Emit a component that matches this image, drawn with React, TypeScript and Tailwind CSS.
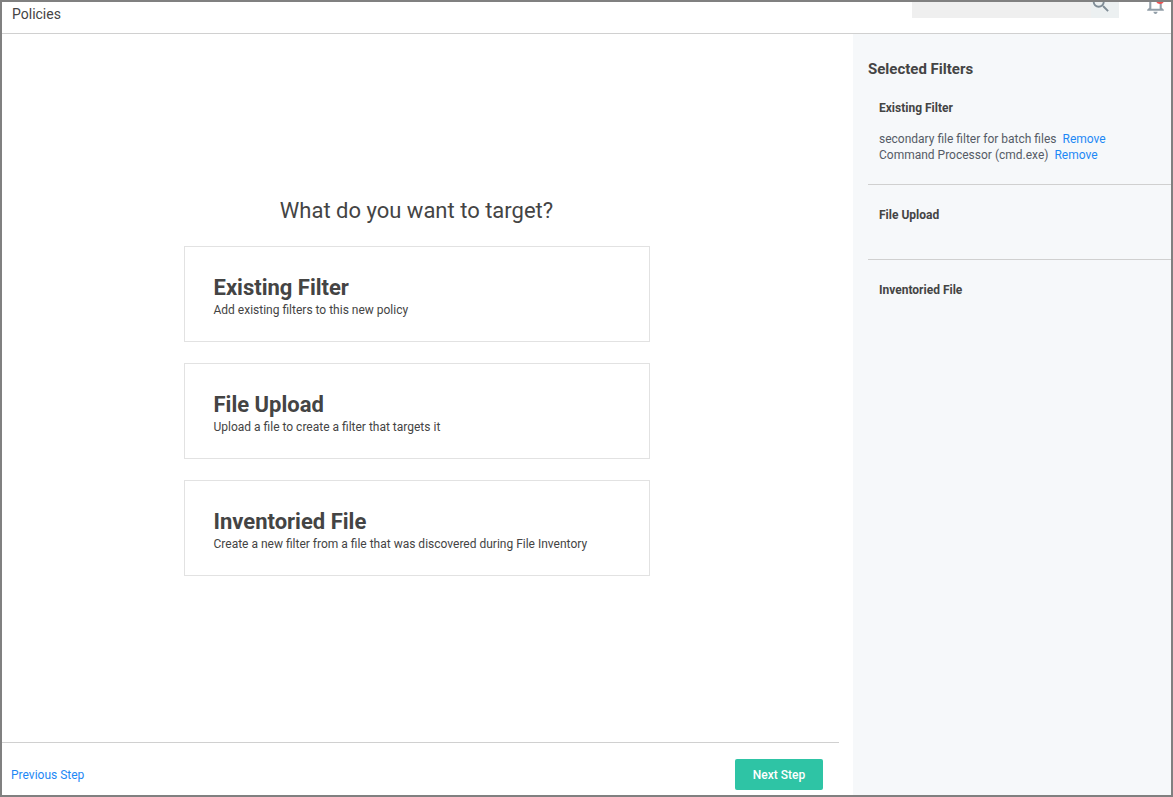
import { MdNotificationsNone, MdSearch } from "react-icons/md";

const targets = [
  { title: "Existing Filter", text: "Add existing filters to this new policy" },
  { title: "File Upload", text: "Upload a file to create a filter that targets it" },
  {
    title: "Inventoried File",
    text: "Create a new filter from a file that was discovered during File Inventory",
  },
];

const groups = [
  {
    title: "Existing Filter",
    items: ["secondary file filter for batch files", "Command Processor (cmd.exe)"],
  },
  { title: "File Upload", items: [] },
  { title: "Inventoried File", items: [] },
];

function Header() {
  return (
    <header className="flex h-8 items-end justify-between overflow-hidden border-b border-[#d0d0d0] pr-[3px] pl-2.5">
      <h1 className="pb-[9px] text-sm">Policies</h1>
      <div className="flex items-end gap-6 pb-[15px]">
        <div className="relative">
          <input
            type="search"
            aria-label="Search"
            className="block h-7 w-[207px] bg-[#efefef] pr-8 pl-2 text-xs outline-none"
          />
          <button
            type="button"
            aria-label="Run search"
            className="absolute right-0 bottom-0 flex h-7 w-7 justify-center bg-[#ecf0f1] pt-[3px] pr-2 text-[#7f8c96]"
          >
            <MdSearch className="size-[22px] shrink-0" />
          </button>
        </div>
        <button type="button" aria-label="Notifications" className="relative mb-0.5 text-[#929ea8]">
          <MdNotificationsNone className="block size-[25px]" />
          <span className="absolute top-[5px] right-1 size-2 rounded-full bg-[#f05050]" />
        </button>
      </div>
    </header>
  );
}

function TargetPicker() {
  return (
    <div className="flex flex-1 flex-col items-center pt-[161px] pr-2">
      <h2 className="mb-[19px] text-[22px] leading-8">What do you want to target?</h2>
      <div className="flex w-[466px] max-w-full flex-col gap-[21px]">
        {targets.map((t) => (
          <button
            key={t.title}
            type="button"
            className="border border-[#e2e2e2] px-[29px] pt-[27px] pb-[23px] text-left"
          >
            <span className="block text-[22px] leading-7 font-bold">{t.title}</span>
            <span className="block text-xs leading-4">{t.text}</span>
          </button>
        ))}
      </div>
    </div>
  );
}

function SelectedFilters() {
  return (
    <aside className="w-[318px] shrink-0 bg-[#f6f8fa] pt-[23px] pl-[15px]">
      <h2 className="mb-[19px] text-[15px] leading-6 font-bold">Selected Filters</h2>
      <div className="divide-y divide-[#d0d0d0]">
        {groups.map((g) => (
          <section key={g.title} className="pb-[21px] pl-[11px] not-first:pt-[22px]">
            <h3 className="mb-[15px] text-xs leading-4 font-bold">{g.title}</h3>
            <ul className="text-xs leading-4 text-[#555b66]">
              {g.items.map((item) => (
                <li key={item} className="flex gap-1.5">
                  {item}
                  <a href="#" className="text-[#1e88f5]">
                    Remove
                  </a>
                </li>
              ))}
            </ul>
          </section>
        ))}
      </div>
    </aside>
  );
}

export default function App() {
  return (
    <div className="flex min-h-screen flex-col border-2 border-[#808080] bg-white font-[Roboto,sans-serif] text-[#444]">
      <Header />
      <div className="flex flex-1">
        <main className="flex min-w-0 flex-1 flex-col pr-3.5">
          <TargetPicker />
          <footer className="flex items-center justify-between border-t border-[#d0d0d0] pt-4 pr-4 pb-[5px] pl-[9px] text-xs">
            <a href="#" className="text-[#1e88f5]">
              Previous Step
            </a>
            <button
              type="button"
              className="h-[31px] w-[88px] rounded-xs bg-[#2ec4a5] font-medium text-white"
            >
              Next Step
            </button>
          </footer>
        </main>
        <SelectedFilters />
      </div>
    </div>
  );
}
